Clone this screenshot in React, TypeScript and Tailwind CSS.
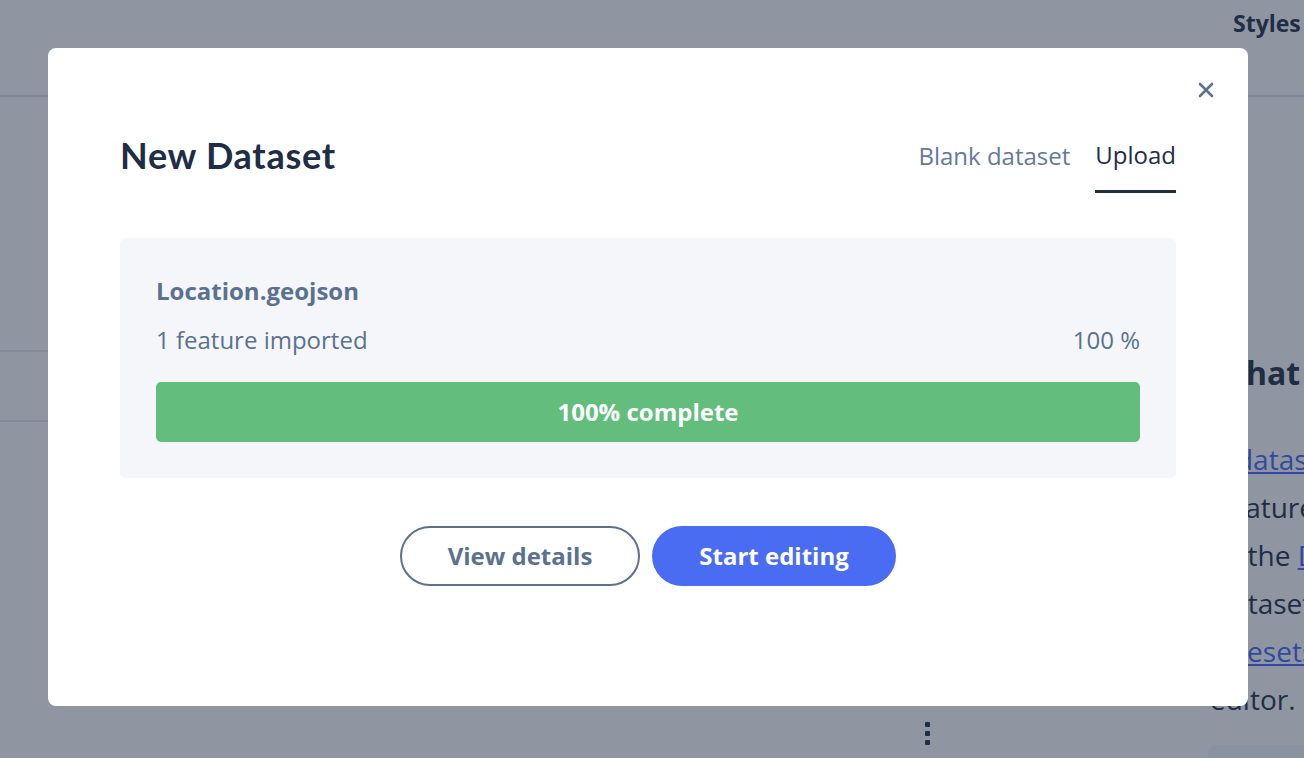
const body = "font-['Open_Sans',sans-serif]";

function BackgroundPage() {
  return (
    <div className={`w-[1304px] h-[758px] bg-white relative overflow-hidden ${body} text-[#1f2d45]`}>
      {/* top bar */}
      <div className="h-[97px] border-b-2 border-[#e1e3ef] flex justify-end">
        <div className="w-[71px] pt-[6px] text-[23px] font-bold whitespace-nowrap overflow-hidden">Styles</div>
      </div>
      <div className="flex">
        {/* left column */}
        <div className="w-[48px]">
          <div className="h-[255px] border-b-2 border-[#e1e3ef]" />
          <div className="h-[70px] border-b-2 border-[#e1e3ef]" />
        </div>
        <div className="flex-1 flex flex-col items-start pl-[877px]">
          <div className="h-[625px]" />
          <div className="flex flex-col gap-[4px]">
            <span className="w-[5px] h-[5px] rounded-[1px] bg-[#1f2d45]" />
            <span className="w-[5px] h-[5px] rounded-[1px] bg-[#1f2d45]" />
            <span className="w-[5px] h-[5px] rounded-[1px] bg-[#1f2d45]" />
          </div>
        </div>
        {/* right panel text */}
        <div className="w-[96px] pt-[256px] whitespace-nowrap">
          <div className="text-[32px] font-bold leading-[40px] ml-[7px]">What</div>
          <div className="mt-[42px] text-[28px] leading-[48px]">
            <div className="ml-[3px]">
              A <span className="underline text-[#4264fb]">datasets</span>
            </div>
            <div className="ml-[12px]">features</div>
            <div className="ml-[8px]">
              in the <span className="underline text-[#4264fb]">Dataset</span>
            </div>
            <div className="ml-[7px]">dataset</div>
            <div className="ml-[15px]">
              <span className="underline text-[#4264fb]">tilesets</span>
            </div>
            <div className="ml-[2px]">editor.</div>
          </div>
          <div className="mt-[22px] h-[40px] rounded-tl-[8px] bg-[#f4f6fa]" />
        </div>
      </div>
    </div>
  );
}

export default function App() {
  return (
    <div className="relative w-[1304px] h-[758px] overflow-hidden">
      <BackgroundPage />
      <div className="absolute inset-0 bg-[#1f2d45]/50 pl-[48px] pt-[48px]">
        <div className={`relative w-[1200px] h-[658px] bg-white rounded-[8px] px-[72px] pt-[91px] ${body}`}>
          <button className="absolute top-[34px] right-[34px] text-[#5b7190]">
            <svg width="16" height="16" viewBox="0 0 16 16" fill="none" stroke="currentColor" strokeWidth="2.6" strokeLinecap="round">
              <path d="M2 2l12 12M14 2L2 14" />
            </svg>
          </button>

          <div className="flex items-start justify-between">
            <h2 className="font-['Lato',sans-serif] font-bold text-[36px] leading-[32px] tracking-[0.02em] text-[#1f2d45]">
              New Dataset
            </h2>
            <div className="flex gap-[25px] text-[24px] leading-[32px]">
              <button className="pb-[19px] border-b-2 border-transparent text-[#64799b]">Blank dataset</button>
              <button className="pb-[19px] border-b-[3px] border-[#1f2d45] text-[#1f2d45]">Upload</button>
            </div>
          </div>

          <div className="mt-[45px] bg-[#f4f6fa] rounded-[6px] px-[36px] pt-[37px] pb-[36px]">
            <div className="text-[24px] leading-[32px] font-bold text-[#5b7190]">Location.geojson</div>
            <div className="mt-[17px] flex justify-between text-[24px] leading-[32px] text-[#5b7190]">
              <span>1 feature imported</span>
              <span>100 %</span>
            </div>
            <div className="mt-[26px] h-[60px] rounded-[5px] bg-[#63be7d] flex items-center justify-center text-white text-[24px] font-bold">
              100% complete
            </div>
          </div>

          <div className="mt-[48px] flex justify-center gap-[12px]">
            <button className="w-[240px] h-[60px] rounded-full border-2 border-[#5b7190] text-[#5b7190] text-[24px] font-bold">
              View details
            </button>
            <button className="w-[244px] h-[60px] rounded-full bg-[#4a6cf3] text-white text-[24px] font-bold">
              Start editing
            </button>
          </div>
        </div>
      </div>
    </div>
  );
}
